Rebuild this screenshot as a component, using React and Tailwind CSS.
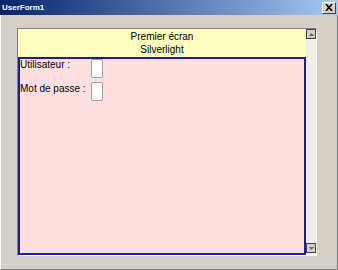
export default function App() {
  return (
    <div className="w-[338px] h-[270px] bg-[#d4d0c8] flex flex-col overflow-hidden" style={{ fontFamily: '"Liberation Sans", Arial, sans-serif' }}>
      {/* Title bar */}
      <div className="h-[15px] flex items-center justify-between pl-[2px] pr-[2px] bg-gradient-to-r from-[#0a246a] to-[#a6caf0]">
        <span className="text-white text-[8px] font-bold leading-none">UserForm1</span>
        <button className="w-[14px] h-[12px] bg-[#d4d0c8] border border-t-white border-l-white border-r-[#404040] border-b-[#404040] flex items-center justify-center">
          <svg width="8" height="7" viewBox="0 0 8 7">
            <path d="M1 0 L7 7 M7 0 L1 7" stroke="#000" strokeWidth="1.6" />
          </svg>
        </button>
      </div>

      {/* Body */}
      <div className="flex-1 pt-[13px] pl-[16px] pr-[20px] pb-[13px] border-l border-r border-b border-l-white border-r-[#808080] border-b-[#808080]">
        <div className="h-full flex border-t border-l border-t-[#808080] border-l-[#808080] border-b border-r border-b-white border-r-white">
          {/* content */}
          <div className="flex-1 flex flex-col">
            <div className="h-[28px] bg-[#ffffc0] flex flex-col items-center justify-center text-[10px] leading-[13px] text-black">
              <span>Premier écran</span>
              <span>Silverlight</span>
            </div>
            <div className="flex-1 bg-[#ffe0e0] border-2 border-[#1c1c9c] flex flex-col gap-[4px] text-[10px] text-black whitespace-nowrap">
              <div className="flex items-start">
                <span className="w-[71px] leading-[12px] pt-0">Utilisateur :</span>
                <div className="w-[12px] h-[19px] bg-white border border-[#a0a0a0] rounded-[2px]" />
              </div>
              <div className="flex items-start">
                <span className="w-[71px] leading-[12px] pt-[1px]">Mot de passe :</span>
                <div className="w-[12px] h-[19px] bg-white border border-[#a0a0a0] rounded-[2px]" />
              </div>
            </div>
          </div>
          {/* scrollbar */}
          <div className="w-[10px] bg-[#f0efea] flex flex-col justify-between">
            <div className="h-[10px] bg-[#d4d0c8] border border-[#404040] flex items-center justify-center">
              <svg width="5" height="3" viewBox="0 0 5 3"><path d="M0 3 L2.5 0 L5 3 Z" fill="#606060" /></svg>
            </div>
            <div className="h-[10px] bg-[#d4d0c8] border border-[#404040] flex items-center justify-center mb-[2px]">
              <svg width="5" height="3" viewBox="0 0 5 3"><path d="M0 0 L2.5 3 L5 0 Z" fill="#606060" /></svg>
            </div>
          </div>
        </div>
      </div>
    </div>
  );
}
